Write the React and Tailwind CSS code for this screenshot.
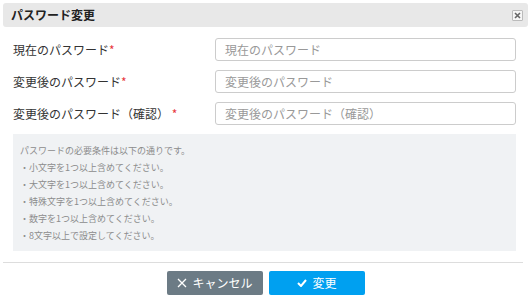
export default function App() {
  const font = { fontFamily: '"Noto Sans CJK JP", "Noto Sans", sans-serif' };
  const rows = [
    ["現在のパスワード", "現在のパスワード", false],
    ["変更後のパスワード", "変更後のパスワード", false],
    ["変更後のパスワード（確認）", "変更後のパスワード（確認）", true],
  ];
  const reqs = [
    "パスワードの必要条件は以下の通りです。",
    "・小文字を1つ以上含めてください。",
    "・大文字を1つ以上含めてください。",
    "・特殊文字を1つ以上含めてください。",
    "・数字を1つ以上含めてください。",
    "・8文字以上で設定してください。",
  ];
  return (
    <div className="w-[531px] h-[305px] bg-white p-[3px] text-[#333]" style={font}>
      <div className="flex items-center justify-between h-[24px] bg-[#e8e8e8] rounded-[3px] pl-[8px] pr-[5px]">
        <span className="text-[12px] font-bold text-[#222] leading-none">パスワード変更</span>
        <div className="w-[11px] h-[11px] border border-[#bbb] bg-[#f6f6f6] flex items-center justify-center rounded-[1px]">
          <svg width="7" height="7" viewBox="0 0 7 7">
            <path d="M1 1L6 6M6 1L1 6" stroke="#666" strokeWidth="1.6" />
          </svg>
        </div>
      </div>
      <div className="px-[10px] pt-[11px]">
        <div className="flex flex-col gap-[9px]">
          {rows.map(([label, ph, sp], i) => (
            <div key={i} className="flex items-center h-[23px]">
              <div className="w-[202px] text-[12px] text-[#333]">
                {label}
                {sp && <span> </span>}
                <span className="text-[#e8383d]">*</span>
              </div>
              <div className="flex-1 h-[23px] border border-[#ccc] rounded-[3px] flex items-center pl-[9px] text-[12px] text-[#999] mr-[2px]">
                {ph}
              </div>
            </div>
          ))}
        </div>
        <div className="mt-[9px] bg-[#f0f2f4] h-[117px] pl-[7px] pt-[8px] mr-[2px]">
          {reqs.map((r, i) => (
            <div key={i} className="text-[9px] text-[#8c8c8c] leading-[17px]">{r}</div>
          ))}
        </div>
      </div>
      <div className="mt-[11px] border-t border-[#ddd] mr-[5px]"></div>
      <div className="flex justify-center gap-[6px] pt-[8px] pl-[1px]">
        <div className="w-[96px] h-[24px] bg-[#6c7b85] rounded-[2px] flex items-center justify-center text-white text-[12px] gap-[5px]">
          <svg width="10" height="10" viewBox="0 0 10 10">
            <path d="M1 1L9 9M9 1L1 9" stroke="white" strokeWidth="1.3" />
          </svg>
          キャンセル
        </div>
        <div className="w-[96px] h-[24px] bg-[#00a0f0] rounded-[2px] flex items-center justify-center text-white text-[12px] gap-[5px]">
          <svg width="10" height="8" viewBox="0 0 10 8">
            <path d="M1 4L4 7L9 1" stroke="white" strokeWidth="2" fill="none" />
          </svg>
          変更
        </div>
      </div>
    </div>
  );
}
